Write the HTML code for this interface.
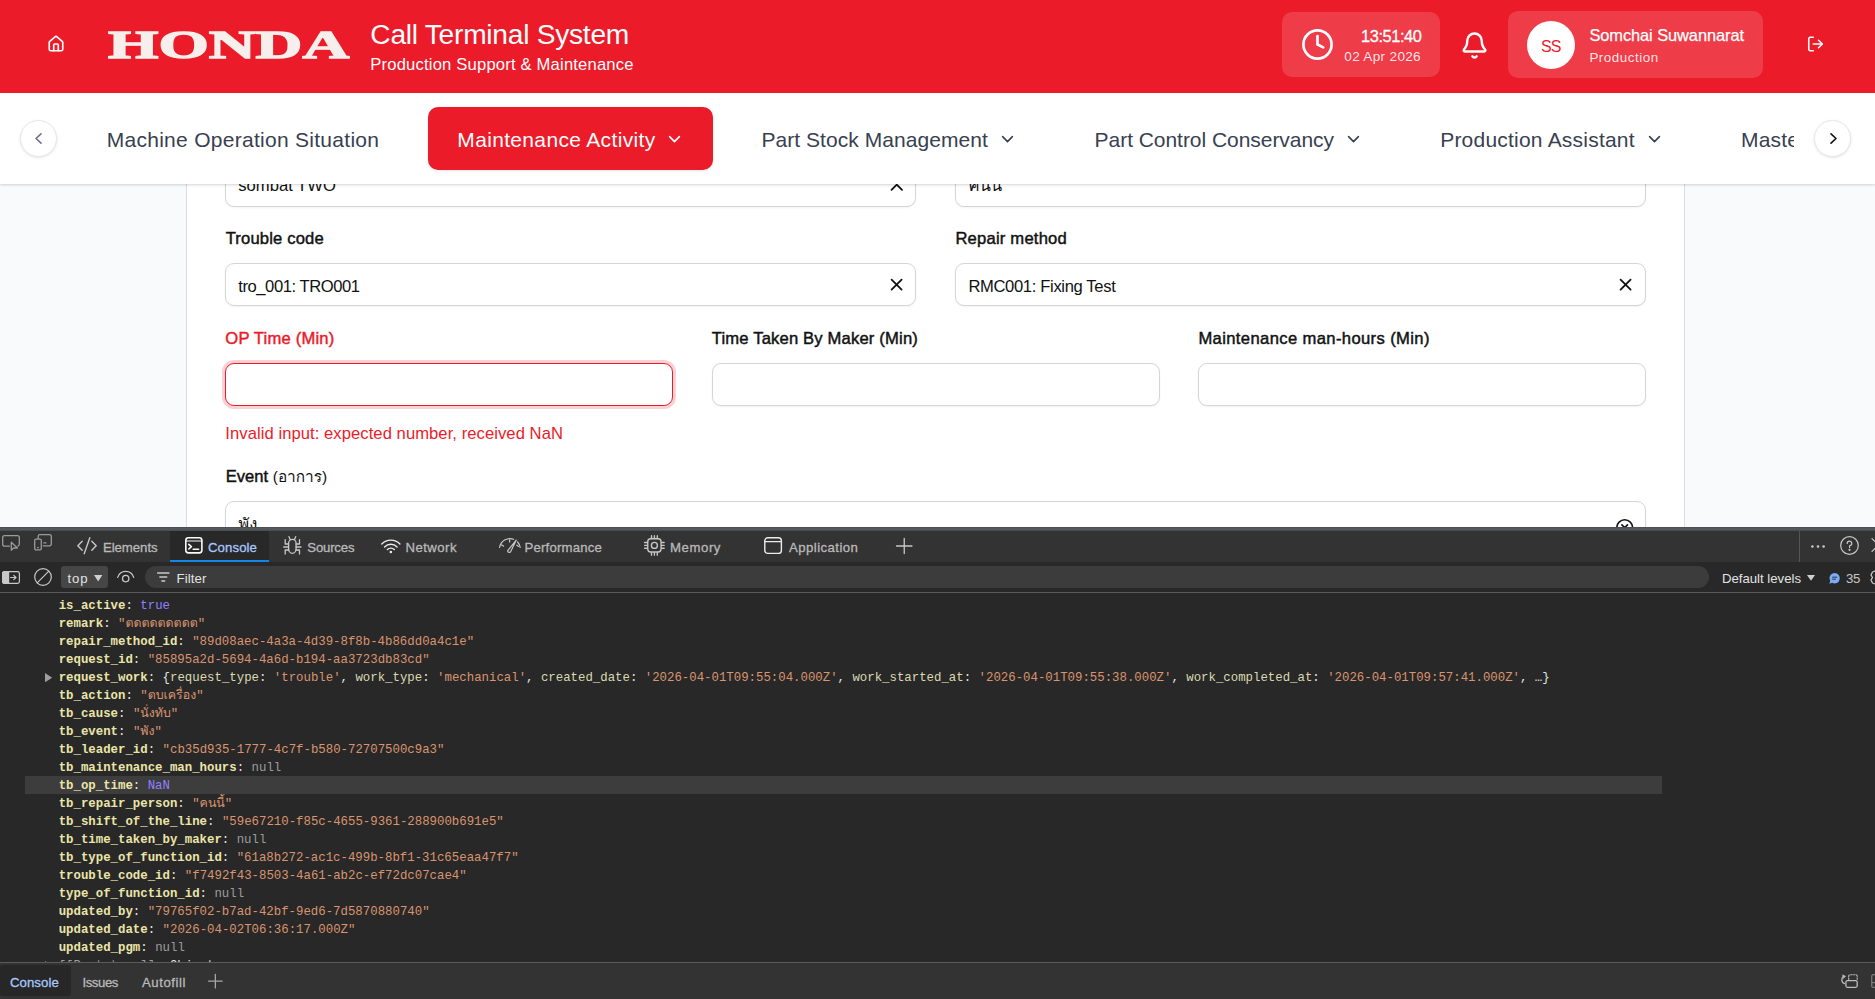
<!DOCTYPE html>
<html lang="en">
<head>
<meta charset="utf-8">
<title>Call Terminal System</title>
<style>
*{box-sizing:border-box;margin:0;padding:0}
html,body{width:1875px;height:999px;overflow:hidden;background:#f9fafb;font-family:"Liberation Sans","Loma","Noto Sans Thai",sans-serif}
.abs,.t,svg.i{position:absolute}
.t{white-space:nowrap;line-height:normal;z-index:4}
#nav,#hdr{z-index:2}
#hdr ~ *{z-index:3}
.t b{font-weight:400;-webkit-text-stroke:0.45px currentColor}
#page{position:absolute;left:0;top:0;width:1875px;height:527px;overflow:hidden;background:#f9fafb}
#hdr{left:0;top:0;width:1875px;height:93px;background:#eb1b29}
#nav{left:0;top:93px;width:1875px;height:91px;background:#fff;box-shadow:0 1px 3px rgba(0,0,0,.12),0 1px 2px rgba(0,0,0,.06)}
#card{left:186px;top:150px;width:1499px;height:400px;background:#fff;border:1px solid #dcdde1}
.pill{background:rgba(255,255,255,.15);border-radius:10px}
.inp{background:#fff;border:1px solid #d3d5d9;border-radius:9px;box-shadow:0 1px 2px rgba(0,0,0,.05)}
.cbtn{width:37px;height:37px;border-radius:50%;background:#fff;border:1px solid #e5e7eb;box-shadow:0 1px 3px rgba(0,0,0,.1)}
svg.i{fill:none;stroke-linecap:round;stroke-linejoin:round;overflow:visible}
#dt{position:absolute;left:0;top:527px;width:1875px;height:472px;background:#282828;overflow:hidden}
.k{color:#ebe5a8;font-weight:700}.k2{color:#dcd8b0}.s{color:#d9946f}.p{color:#9080ff}.n{color:#9c9c9c}.w{color:#e4e4e4}
</style>
</head>
<body>
<div id="page">
  <div class="abs" id="card"></div>
  <!-- form fields -->
  <div class="abs inp" style="left:225px;top:164px;width:691px;height:43px"></div>
  <div class="abs inp" style="left:955px;top:164px;width:691px;height:43px"></div>
  <div class="abs inp" style="left:225px;top:263px;width:691px;height:43px"></div>
  <div class="abs inp" style="left:955px;top:263px;width:691px;height:43px"></div>
  <div class="abs inp" style="left:225px;top:363px;width:448px;height:43px;border:1.5px solid #eb1b29;box-shadow:0 0 0 3px rgba(235,27,41,.2)"></div>
  <div class="abs inp" style="left:711.5px;top:363px;width:448px;height:43px"></div>
  <div class="abs inp" style="left:1198px;top:363px;width:448px;height:43px"></div>
  <div class="abs inp" style="left:225px;top:501px;width:1421px;height:90px"></div>
  <!-- field icons -->
  <svg class="i" style="left:891px;top:184px" width="11.5" height="6" viewBox="0 0 11.5 6" stroke="#111" stroke-width="1.8"><path d="M0.5 5.8 L5.75 0.6 L11 5.8"/></svg>
  <svg class="i" style="left:891px;top:279.4px" width="11.2" height="11.2" viewBox="0 0 11.2 11.2" stroke="#111" stroke-width="1.8"><path d="M0.6 0.6 L10.6 10.6 M10.6 0.6 L0.6 10.6"/></svg>
  <svg class="i" style="left:1620px;top:279.4px" width="11.2" height="11.2" viewBox="0 0 11.2 11.2" stroke="#111" stroke-width="1.8"><path d="M0.6 0.6 L10.6 10.6 M10.6 0.6 L0.6 10.6"/></svg>
  <svg class="i" style="left:1616px;top:518.6px" width="17.4" height="17.4" viewBox="0 0 17.4 17.4" stroke="#111" stroke-width="1.6"><circle cx="8.7" cy="8.7" r="7.9"/><path d="M5.9 5.9 L11.5 11.5 M11.5 5.9 L5.9 11.5"/></svg>

  <div class="abs" id="nav"></div>
  <div class="abs" id="hdr"></div>

  <!-- header icons -->
  <svg class="i" style="left:46.5px;top:35px" width="18" height="18" viewBox="0 0 24 24" stroke="#fff" stroke-width="2.2"><path d="M15 21v-8a1 1 0 0 0-1-1h-4a1 1 0 0 0-1 1v8"/><path d="M3 10a2 2 0 0 1 .709-1.528l7-5.999a2 2 0 0 1 2.582 0l7 5.999A2 2 0 0 1 21 10v9a2 2 0 0 1-2 2H5a2 2 0 0 1-2-2z"/></svg>
  <div class="abs pill" style="left:1282px;top:12px;width:158px;height:65px"></div>
  <svg class="i" style="left:1302.2px;top:29.2px" width="31" height="31" viewBox="0 0 31 31" stroke="#fff" stroke-width="2.7"><circle cx="15.5" cy="15.5" r="14.1"/><path d="M15.5 7 V15.5 L21.2 18.4"/></svg>
  <svg class="i" style="left:1459.9px;top:30.5px" width="29" height="29" viewBox="0 0 24 24" stroke="#fff" stroke-width="2"><path d="M10.268 21a2 2 0 0 0 3.464 0"/><path d="M3.262 15.326A1 1 0 0 0 4 17h16a1 1 0 0 0 .74-1.673C19.41 13.956 18 12.499 18 8A6 6 0 0 0 6 8c0 4.499-1.411 5.956-2.738 7.326"/></svg>
  <div class="abs pill" style="left:1508px;top:11px;width:255px;height:67px"></div>
  <div class="abs" style="left:1527px;top:21px;width:48px;height:48px;border-radius:50%;background:#fff"></div>
  <svg class="i" style="left:1806px;top:35px" width="19" height="18" viewBox="0 0 24 24" stroke="#fff" stroke-width="2.1"><path d="M9 21H5a2 2 0 0 1-2-2V5a2 2 0 0 1 2-2h4"/><path d="M16 17l5-5-5-5"/><path d="M21 12H9"/></svg>

  <!-- nav -->
  <div class="abs cbtn" style="left:20px;top:120px"></div>
  <svg class="i" style="left:34.8px;top:133.3px" width="7" height="11" viewBox="0 0 7 11" stroke="#6b7280" stroke-width="1.6"><path d="M6 0.8 L1 5.5 L6 10.2"/></svg>
  <div class="abs" style="left:428px;top:107px;width:285px;height:63px;border-radius:10px;background:#eb1b29;box-shadow:0 1px 3px rgba(0,0,0,.1)"></div>
  <svg class="i ch" style="left:669.4px;top:136px" width="11" height="6.4" viewBox="0 0 11 6.4" stroke="#fff" stroke-width="1.6"><path d="M0.6 0.6 L5.5 5.6 L10.4 0.6"/></svg>
  <svg class="i ch" style="left:1001.5px;top:136px" width="11" height="6.4" viewBox="0 0 11 6.4" stroke="#374151" stroke-width="1.6"><path d="M0.6 0.6 L5.5 5.6 L10.4 0.6"/></svg>
  <svg class="i ch" style="left:1348px;top:136px" width="11" height="6.4" viewBox="0 0 11 6.4" stroke="#374151" stroke-width="1.6"><path d="M0.6 0.6 L5.5 5.6 L10.4 0.6"/></svg>
  <svg class="i ch" style="left:1649px;top:136px" width="11" height="6.4" viewBox="0 0 11 6.4" stroke="#374151" stroke-width="1.6"><path d="M0.6 0.6 L5.5 5.6 L10.4 0.6"/></svg>
  <div class="abs" id="mclip" style="left:1741px;top:110px;width:53px;height:60px;overflow:hidden;z-index:3"></div>
  <div class="abs cbtn" style="left:1814px;top:120px"></div>
  <svg class="i" style="left:1829.5px;top:133.3px" width="7" height="11" viewBox="0 0 7 11" stroke="#111" stroke-width="1.6"><path d="M1 0.8 L6 5.5 L1 10.2"/></svg>
</div>

<div id="dt">
  <div class="abs" style="left:0;top:0;width:1875px;height:4px;z-index:2;background:linear-gradient(#48494d 0,#56585d 30%,#54565b 80%,#3c3d40 100%)"></div>
  <div class="abs" style="left:0;top:4px;width:1875px;height:31px;background:#333"></div>
  <div class="abs" style="left:170px;top:4px;width:99px;height:31px;background:#282828;border-bottom:2px solid #1386ea"></div>
  <div class="abs" style="left:1799px;top:4px;width:1px;height:31px;background:#555"></div>
  <div class="abs" style="left:61px;top:39px;width:47px;height:22px;background:#464646;border-radius:3px"></div>
  <div class="abs" style="left:145px;top:39px;width:1564px;height:22px;background:#3c3c3c;border-radius:11px"></div>
  <div class="abs" style="left:0;top:65px;width:1875px;height:1px;background:#5a5a5a"></div>
  <div class="abs" style="left:25px;top:249px;width:1637px;height:18px;background:#3d3d3d"></div>
  <div class="abs" style="left:0;top:435px;width:1875px;height:37px;background:#333;border-top:1px solid #5a5a5a;z-index:5"></div>
  <div class="abs" style="left:0;top:438px;width:71px;height:31px;background:#272727;border-radius:3px;z-index:5"></div>
</div>
<!-- devtools icons -->
<svg class="i" style="left:2px;top:535px" width="18" height="16" viewBox="0 0 18 16" stroke="#9a9a9a" stroke-width="1.3"><path d="M7.5 11.2 H2.6 A1.9 1.9 0 0 1 0.7 9.3 V2.6 A1.9 1.9 0 0 1 2.6 0.7 H15.4 A1.9 1.9 0 0 1 17.3 2.6 V9.3 A1.9 1.9 0 0 1 15.9 11.1"/><path d="M9.3 7.2 V15.2 L11.6 13 L15.4 13 Z"/></svg>
<svg class="i" style="left:34px;top:534.3px" width="18" height="16.5" viewBox="0 0 18 16.5" stroke="#9a9a9a" stroke-width="1.3"><path d="M4.2 4.4 V2.3 A1.6 1.6 0 0 1 5.8 0.7 H15.7 A1.6 1.6 0 0 1 17.3 2.3 V10.2 A1.6 1.6 0 0 1 15.7 11.8 H9.3"/><rect x="0.7" y="5.1" width="6.6" height="10.7" rx="1.3"/><path d="M3.6 13.6 H4.4 M9.8 8.8 H12"/></svg>
<svg class="i" style="left:77.3px;top:536.8px" width="20" height="17.4" viewBox="0 0 20 17.4" stroke="#c8c8c8" stroke-width="1.4"><path d="M5.2 4.2 L0.8 8.7 L5.2 13.2 M14.8 4.2 L19.2 8.7 L14.8 13.2 M12.8 0.7 L7.2 16.7"/></svg>
<svg class="i" style="left:184.7px;top:537px" width="17.7" height="16.7" viewBox="0 0 17.7 16.7" stroke="#fafafa" stroke-width="1.6"><rect x="0.8" y="0.8" width="16.1" height="15.1" rx="2.6"/><path d="M0.8 4 H16.9" stroke-width="1.1"/><path d="M3.8 7.4 L6.4 9.7 L3.8 12 M8.2 12.2 H13.6"/></svg>
<svg class="i" style="left:283.3px;top:535.7px" width="18.7" height="18.6" viewBox="0 0 18.7 18.6" stroke="#c8c8c8" stroke-width="1.3"><path d="M5.6 7.2 A3.75 3.75 0 0 1 13.1 7.2 V12.4 A3.75 5 0 0 1 5.6 12.4 Z"/><path d="M7.2 3.6 L6 0.7 M11.5 3.6 L12.7 0.7 M5.6 8 H2.2 V3.6 M13.1 8 H16.5 V3.6 M5.6 11 H0.7 M13.1 11 H18 M5.8 14 H2.2 V18 M12.9 14 H16.5 V18"/></svg>
<svg class="i" style="left:380.7px;top:539px" width="19.7" height="14.5" viewBox="0 0 19.7 14.5" stroke="#ececec" stroke-width="1.4"><path d="M0.8 5 A12.5 12.5 0 0 1 18.9 5"/><path d="M3.6 7.9 A8.6 8.6 0 0 1 16.1 7.9"/><path d="M6.4 10.6 A4.8 4.8 0 0 1 13.3 10.6"/><circle cx="9.85" cy="13" r="1.3" fill="#ececec" stroke="none"/></svg>
<svg class="i" style="left:498.7px;top:537.5px" width="22" height="15" viewBox="0 0 22 15" stroke="#c8c8c8" stroke-width="1.2"><path d="M0.62 9.4 A10.4 10.4 0 0 1 14.6 1.3 M18.6 4 A10.4 10.4 0 0 1 21.18 9.4"/><path d="M17.3 2.1 L11.7 13.5 A1.5 1.5 0 0 1 8.9 12.3 Z"/><path d="M10.6 1.9 V4 M2.6 6.9 L4.5 8.1 M17.9 7.2 L19.4 8.4"/></svg>
<svg class="i" style="left:644.1px;top:534.8px" width="20.8" height="20.8" viewBox="0 0 19.4 19.4" stroke="#c8c8c8" stroke-width="1.25"><rect x="3.5" y="3.5" width="12.4" height="12.4" rx="2.8"/><circle cx="9.7" cy="9.7" r="2.8"/><path d="M7 0.6 V3 M9.7 0.6 V3 M12.4 0.6 V3 M7 16.4 V18.8 M9.7 16.4 V18.8 M12.4 16.4 V18.8 M0.6 7 H3 M0.6 9.7 H3 M0.6 12.4 H3 M16.4 7 H18.8 M16.4 9.7 H18.8 M16.4 12.4 H18.8"/></svg>
<svg class="i" style="left:764.4px;top:536.7px" width="18.2" height="17.2" viewBox="0 0 18.2 17.2" stroke="#ececec" stroke-width="1.4"><rect x="0.8" y="0.8" width="16.6" height="15.6" rx="3"/><path d="M0.8 4.6 H17.4"/></svg>
<svg class="i" style="left:896.2px;top:537.8px" width="16.5" height="16" viewBox="0 0 16.5 16" stroke="#c8c8c8" stroke-width="1.3"><path d="M8.25 0.5 V15.5 M0.5 8 H16"/></svg>
<svg class="i" style="left:1811px;top:544.5px" width="14" height="3" viewBox="0 0 14 3" fill="#c8c8c8" stroke="none"><circle cx="1.4" cy="1.5" r="1.3" fill="#c8c8c8"/><circle cx="7" cy="1.5" r="1.3" fill="#c8c8c8"/><circle cx="12.6" cy="1.5" r="1.3" fill="#c8c8c8"/></svg>
<svg class="i" style="left:1840px;top:536px" width="19" height="19" viewBox="0 0 19 19" stroke="#c8c8c8" stroke-width="1.2"><circle cx="9.5" cy="9.5" r="8.8"/><path d="M7.2 7.4 A2.3 2.3 0 1 1 9.9 9.7 Q9.5 10.2 9.5 11.4"/><circle cx="9.5" cy="13.8" r="0.5" fill="#c8c8c8"/></svg>
<svg class="i" style="left:1867px;top:538px" width="14" height="14" viewBox="0 0 14 14" stroke="#c8c8c8" stroke-width="1.3"><path d="M5 0.6 L18 13.4 M5 13.4 L18 0.6"/></svg>
<!-- filter bar icons -->
<svg class="i" style="left:2px;top:570.5px" width="18" height="13" viewBox="0 0 18 13" stroke="#c8c8c8" stroke-width="1.2"><rect x="0.6" y="0.6" width="16.8" height="11.8" rx="1.8"/><path d="M0.6 2.4 A1.8 1.8 0 0 1 2.4 0.6 H6.6 V12.4 H2.4 A1.8 1.8 0 0 1 0.6 10.6 Z" fill="#c8c8c8"/><path d="M8.6 6.5 H13.8 M11.8 4.3 L14 6.5 L11.8 8.7"/></svg>
<svg class="i" style="left:34px;top:568px" width="18" height="18" viewBox="0 0 18 18" stroke="#c8c8c8" stroke-width="1.2"><circle cx="9" cy="9" r="8.3"/><path d="M3.2 14.8 L14.8 3.2"/></svg>
<svg class="i" style="left:93.9px;top:575px" width="8.4" height="6.4" viewBox="0 0 8.4 6.4" stroke="none"><path d="M0 0 H8.4 L4.2 6.4 Z" fill="#d0d0d0"/></svg>
<svg class="i" style="left:117.3px;top:571.3px" width="17.4" height="11.5" viewBox="0 0 17.4 11.5" stroke="#c8c8c8" stroke-width="1.3"><path d="M0.7 6.4 A8.3 8.3 0 0 1 16.7 6.4"/><circle cx="8.7" cy="7.6" r="3.2"/></svg>
<svg class="i" style="left:156.8px;top:572.3px" width="12.6" height="10" viewBox="0 0 12.6 10" stroke="#c8c8c8" stroke-width="1.3"><path d="M0.6 1 H12 M2.8 5 H9.8 M4.8 9 H7.8"/></svg>
<svg class="i" style="left:1807px;top:575.4px" width="8" height="5.8" viewBox="0 0 8 5.8" stroke="none"><path d="M0 0 H8 L4 5.8 Z" fill="#d0d0d0"/></svg>
<svg class="i" style="left:1829px;top:572.5px" width="11" height="11" viewBox="0 0 11 11" stroke="none"><path d="M5.6 0 A5.2 5.2 0 1 1 3.2 9.8 L0.3 10.8 L1.2 8 A5.2 5.2 0 0 1 5.6 0 Z" fill="#7cacf8"/><path d="M3.6 4.2 H7.8 M3.6 6.2 H6.4" stroke="#282828" stroke-width="0.9"/></svg>
<svg class="i" style="left:1870px;top:570px" width="14" height="15" viewBox="0 0 14 15" stroke="#c8c8c8" stroke-width="1.3"><path d="M5 1 L2.5 2 L1 5 L2.5 7.5 L1 10 L2.5 13 L5 14"/></svg>
<!-- console expand arrows -->
<svg class="i" style="left:44.8px;top:672.7px" width="7.2" height="9.3" viewBox="0 0 7.2 9.3" stroke="none"><path d="M0 0 L7.2 4.65 L0 9.3 Z" fill="#9e9e9e"/></svg>
<svg class="i" style="left:44.8px;top:960.7px" width="7.2" height="9.3" viewBox="0 0 7.2 9.3" stroke="none"><path d="M0 0 L7.2 4.65 L0 9.3 Z" fill="#9e9e9e"/></svg>

<!-- bottom bar icons -->
<svg class="i" style="left:207.7px;top:973.8px;z-index:7" width="14.7" height="14.4" viewBox="0 0 14.7 14.4" stroke="#a6a6a6" stroke-width="1.3"><path d="M7.35 0.5 V13.9 M0.5 7.2 H14.2"/></svg>
<svg class="i" style="left:1838.8px;top:974px;z-index:7" width="19" height="14" viewBox="0 0 19 14" stroke="#bdbdbd" stroke-width="1.3"><rect x="6.9" y="6.7" width="11.3" height="6.6" rx="1.5"/><path d="M9.7 5.4 V2.2 A1.5 1.5 0 0 1 11.2 0.7 H16.7 A1.5 1.5 0 0 1 18.2 2.2 V5.4" stroke-dasharray="1.5 1.4" stroke-width="1.1"/><path d="M5.4 9.6 A4.2 4.2 0 0 1 4.4 2.4"/><path d="M3.8 1.0 L6.6 2.2 L4.6 4.2 Z" fill="#bdbdbd" stroke-width="0.6"/></svg>
<svg class="i" style="left:1871px;top:974.3px;z-index:7" width="10" height="14" viewBox="0 0 10 14" stroke="#7a7a7a" stroke-width="1.3"><path d="M8 0.7 H2.3 A1.6 1.6 0 0 0 0.7 2.3 V11.7 A1.6 1.6 0 0 0 2.3 13.3 H8 M0.7 8.6 H8"/></svg>

<span class="t" id="logo" style='left:108.4px;top:20.60px;font:700 40px "Liberation Serif","DejaVu Serif",serif;color:#f6efec;transform-origin:0 50%;transform:scaleX(1.62);-webkit-text-stroke:1.3px #f6efec;'>HONDA</span>
<span class="t" id="title" style='left:370.3px;top:18.20px;font:400 28.2px "Liberation Sans","Loma","Noto Sans Thai","FreeSerif",sans-serif;color:#fff;letter-spacing:-0.275px;'>Call Terminal System</span>
<span class="t" id="subtitle" style='left:370.3px;top:55.00px;font:400 16.6px "Liberation Sans","Loma","Noto Sans Thai","FreeSerif",sans-serif;color:#fff;letter-spacing:0.188px;'>Production Support &amp; Maintenance</span>
<span class="t" id="time" style='left:1361px;top:27.00px;font:400 16.4px "Liberation Sans","Loma","Noto Sans Thai","FreeSerif",sans-serif;color:#fff;letter-spacing:-0.414px;-webkit-text-stroke:0.3px #fff;'>13:51:40</span>
<span class="t" id="date" style='left:1344.3px;top:49.20px;font:400 13.6px "Liberation Sans","Loma","Noto Sans Thai","FreeSerif",sans-serif;color:rgba(255,255,255,.88);letter-spacing:0.307px;'>02 Apr 2026</span>
<span class="t" id="ss" style='left:1541px;top:37.80px;font:400 16px "Liberation Sans","Loma","Noto Sans Thai","FreeSerif",sans-serif;color:#eb1b29;letter-spacing:-0.972px;'>SS</span>
<span class="t" id="uname" style='left:1589.4px;top:26.00px;font:400 16.4px "Liberation Sans","Loma","Noto Sans Thai","FreeSerif",sans-serif;color:#fff;letter-spacing:-0.067px;-webkit-text-stroke:0.25px #fff;'>Somchai Suwannarat</span>
<span class="t" id="urole" style='left:1589.4px;top:49.90px;font:400 13.4px "Liberation Sans","Loma","Noto Sans Thai","FreeSerif",sans-serif;color:rgba(255,255,255,.88);letter-spacing:0.527px;'>Production</span>
<span class="t" id="n1" style='left:106.7px;top:127.80px;font:400 21px "Liberation Sans","Loma","Noto Sans Thai","FreeSerif",sans-serif;color:#374151;letter-spacing:0.281px;'>Machine Operation Situation</span>
<span class="t" id="n2" style='left:457.3px;top:127.80px;font:400 21px "Liberation Sans","Loma","Noto Sans Thai","FreeSerif",sans-serif;color:#fff;letter-spacing:0.338px;'>Maintenance Activity</span>
<span class="t" id="n3" style='left:761.4px;top:127.80px;font:400 21px "Liberation Sans","Loma","Noto Sans Thai","FreeSerif",sans-serif;color:#374151;letter-spacing:0.063px;'>Part Stock Management</span>
<span class="t" id="n4" style='left:1094.6px;top:127.80px;font:400 21px "Liberation Sans","Loma","Noto Sans Thai","FreeSerif",sans-serif;color:#374151;letter-spacing:-0.043px;'>Part Control Conservancy</span>
<span class="t" id="n5" style='left:1440.2px;top:127.80px;font:400 21px "Liberation Sans","Loma","Noto Sans Thai","FreeSerif",sans-serif;color:#374151;letter-spacing:0.216px;'>Production Assistant</span>
<span class="t" id="n6" style='left:1741px;top:127.80px;font:400 21px "Liberation Sans","Loma","Noto Sans Thai","FreeSerif",sans-serif;color:#374151;width:53px;overflow:hidden;letter-spacing:0.2px;'>Master Data</span>
<span class="t" id="v0a" style='left:238.3px;top:176.30px;font:400 16.6px "Liberation Sans","Loma","Noto Sans Thai","FreeSerif",sans-serif;color:#111;letter-spacing:0.006px;z-index:1;'>sombat TWO</span>
<span class="t" id="v0b" style='left:968.4px;top:172.30px;font:400 16.6px "Liberation Sans","Loma","Noto Sans Thai","FreeSerif",sans-serif;color:#111;z-index:1;'>คนนี้</span>
<span class="t" id="l1" style='left:225.7px;top:229.00px;font:400 16.6px "Liberation Sans","Loma","Noto Sans Thai","FreeSerif",sans-serif;color:#111;letter-spacing:0.154px;-webkit-text-stroke:0.45px currentColor;'>Trouble code</span>
<span class="t" id="l2" style='left:955.4px;top:229.00px;font:400 16.6px "Liberation Sans","Loma","Noto Sans Thai","FreeSerif",sans-serif;color:#111;letter-spacing:0.212px;-webkit-text-stroke:0.45px currentColor;'>Repair method</span>
<span class="t" id="v1" style='left:238.3px;top:277.00px;font:400 16.6px "Liberation Sans","Loma","Noto Sans Thai","FreeSerif",sans-serif;color:#111;letter-spacing:-0.448px;'>tro_001: TRO001</span>
<span class="t" id="v2" style='left:968.4px;top:277.00px;font:400 16.6px "Liberation Sans","Loma","Noto Sans Thai","FreeSerif",sans-serif;color:#111;letter-spacing:-0.353px;'>RMC001: Fixing Test</span>
<span class="t" id="l3" style='left:225.3px;top:329.30px;font:400 16.6px "Liberation Sans","Loma","Noto Sans Thai","FreeSerif",sans-serif;color:#eb1b29;letter-spacing:0.196px;-webkit-text-stroke:0.45px currentColor;'>OP Time (Min)</span>
<span class="t" id="l4" style='left:711.8px;top:329.30px;font:400 16.6px "Liberation Sans","Loma","Noto Sans Thai","FreeSerif",sans-serif;color:#111;letter-spacing:0.170px;-webkit-text-stroke:0.45px currentColor;'>Time Taken By Maker (Min)</span>
<span class="t" id="l5" style='left:1198.4px;top:329.30px;font:400 16.6px "Liberation Sans","Loma","Noto Sans Thai","FreeSerif",sans-serif;color:#111;letter-spacing:0.372px;-webkit-text-stroke:0.45px currentColor;'>Maintenance man-hours (Min)</span>
<span class="t" id="err" style='left:225.3px;top:424.20px;font:400 16.6px "Liberation Sans","Loma","Noto Sans Thai","FreeSerif",sans-serif;color:#eb1b29;letter-spacing:0.065px;'>Invalid input: expected number, received NaN</span>
<span class="t" id="l6" style='left:225.7px;top:464.30px;font:400 16.6px "Liberation Sans","Loma","Noto Sans Thai","FreeSerif",sans-serif;color:#111;'><b>Event</b> <span style="font-size:15.4px">(อาการ)</span></span>
<span class="t" id="v6" style='left:238.3px;top:511.00px;font:400 16.6px "Liberation Sans","Loma","Noto Sans Thai","FreeSerif",sans-serif;color:#111;z-index:1;'>พัง</span>
<span class="t" id="d_el" style='left:102.9px;top:540.00px;font:400 13.2px "Liberation Sans","Loma","Noto Sans Thai","FreeSerif",sans-serif;color:#b9b9b9;letter-spacing:-0.036px;-webkit-text-stroke:0.3px currentColor;'>Elements</span>
<span class="t" id="d_co" style='left:208px;top:540.00px;font:400 13.2px "Liberation Sans","Loma","Noto Sans Thai","FreeSerif",sans-serif;color:#a8c7fa;letter-spacing:0.087px;-webkit-text-stroke:0.3px currentColor;'>Console</span>
<span class="t" id="d_so" style='left:307.3px;top:540.00px;font:400 13.2px "Liberation Sans","Loma","Noto Sans Thai","FreeSerif",sans-serif;color:#b9b9b9;letter-spacing:-0.199px;-webkit-text-stroke:0.3px currentColor;'>Sources</span>
<span class="t" id="d_ne" style='left:405.5px;top:540.00px;font:400 13.2px "Liberation Sans","Loma","Noto Sans Thai","FreeSerif",sans-serif;color:#b9b9b9;letter-spacing:0.446px;-webkit-text-stroke:0.3px currentColor;'>Network</span>
<span class="t" id="d_pe" style='left:524.5px;top:540.00px;font:400 13.2px "Liberation Sans","Loma","Noto Sans Thai","FreeSerif",sans-serif;color:#b9b9b9;letter-spacing:0.182px;-webkit-text-stroke:0.3px currentColor;'>Performance</span>
<span class="t" id="d_me" style='left:670px;top:540.00px;font:400 13.2px "Liberation Sans","Loma","Noto Sans Thai","FreeSerif",sans-serif;color:#b9b9b9;letter-spacing:0.562px;-webkit-text-stroke:0.3px currentColor;'>Memory</span>
<span class="t" id="d_ap" style='left:789px;top:540.00px;font:400 13.2px "Liberation Sans","Loma","Noto Sans Thai","FreeSerif",sans-serif;color:#b9b9b9;letter-spacing:0.435px;-webkit-text-stroke:0.3px currentColor;'>Application</span>
<span class="t" id="d_top" style='left:67.5px;top:570.60px;font:400 13.2px "Liberation Sans","Loma","Noto Sans Thai","FreeSerif",sans-serif;color:#e3e3e3;letter-spacing:0.885px;'>top</span>
<span class="t" id="d_fil" style='left:176.5px;top:570.60px;font:400 13.2px "Liberation Sans","Loma","Noto Sans Thai","FreeSerif",sans-serif;color:#e3e3e3;letter-spacing:0.115px;'>Filter</span>
<span class="t" id="d_def" style='left:1721.9px;top:570.60px;font:400 13.2px "Liberation Sans","Loma","Noto Sans Thai","FreeSerif",sans-serif;color:#e3e3e3;letter-spacing:-0.005px;'>Default levels</span>
<span class="t" id="d_35" style='left:1846px;top:570.60px;font:400 13.2px "Liberation Sans","Loma","Noto Sans Thai","FreeSerif",sans-serif;color:#c7c7c7;letter-spacing:-0.336px;'>35</span>
<span class="t" id="b_co" style='left:9.9px;top:974.60px;font:400 13.2px "Liberation Sans","Loma","Noto Sans Thai","FreeSerif",sans-serif;color:#a8c7fa;letter-spacing:0.087px;-webkit-text-stroke:0.3px currentColor;z-index:6;'>Console</span>
<span class="t" id="b_is" style='left:82.4px;top:974.60px;font:400 13.2px "Liberation Sans","Loma","Noto Sans Thai","FreeSerif",sans-serif;color:#b9b9b9;letter-spacing:-0.421px;-webkit-text-stroke:0.3px currentColor;z-index:6;'>Issues</span>
<span class="t" id="b_au" style='left:142px;top:974.60px;font:400 13.2px "Liberation Sans","Loma","Noto Sans Thai","FreeSerif",sans-serif;color:#b9b9b9;letter-spacing:0.551px;-webkit-text-stroke:0.3px currentColor;z-index:6;'>Autofill</span>
<span class="t" id="c0" style='left:58.7px;top:598.90px;font:400 12.36px "Liberation Mono","Loma","Noto Sans Thai","DejaVu Sans Mono",monospace;color:#e4e4e4;z-index:1;'><span class="k">is_active</span><span class="w">: </span><span class="p">true</span></span>
<span class="t" id="c1" style='left:58.7px;top:612.90px;font:400 12.36px "Liberation Mono","Loma","Noto Sans Thai","DejaVu Sans Mono",monospace;color:#e4e4e4;z-index:1;'><span class="k">remark</span><span class="w">: </span><span class="s">&quot;ตดตดตดตดต&quot;</span></span>
<span class="t" id="c2" style='left:58.7px;top:634.90px;font:400 12.36px "Liberation Mono","Loma","Noto Sans Thai","DejaVu Sans Mono",monospace;color:#e4e4e4;z-index:1;'><span class="k">repair_method_id</span><span class="w">: </span><span class="s">&quot;89d08aec-4a3a-4d39-8f8b-4b86dd0a4c1e&quot;</span></span>
<span class="t" id="c3" style='left:58.7px;top:652.90px;font:400 12.36px "Liberation Mono","Loma","Noto Sans Thai","DejaVu Sans Mono",monospace;color:#e4e4e4;z-index:1;'><span class="k">request_id</span><span class="w">: </span><span class="s">&quot;85895a2d-5694-4a6d-b194-aa3723db83cd&quot;</span></span>
<span class="t" id="c4" style='left:58.7px;top:670.90px;font:400 12.36px "Liberation Mono","Loma","Noto Sans Thai","DejaVu Sans Mono",monospace;color:#e4e4e4;z-index:1;'><span class="k">request_work</span><span class="w">: {</span><span class="k2">request_type</span><span class="w">: </span><span class="s">&#x27;trouble&#x27;</span><span class="w">, </span><span class="k2">work_type</span><span class="w">: </span><span class="s">&#x27;mechanical&#x27;</span><span class="w">, </span><span class="k2">created_date</span><span class="w">: </span><span class="s">&#x27;2026-04-01T09:55:04.000Z&#x27;</span><span class="w">, </span><span class="k2">work_started_at</span><span class="w">: </span><span class="s">&#x27;2026-04-01T09:55:38.000Z&#x27;</span><span class="w">, </span><span class="k2">work_completed_at</span><span class="w">: </span><span class="s">&#x27;2026-04-01T09:57:41.000Z&#x27;</span><span class="w">, …}</span></span>
<span class="t" id="c5" style='left:58.7px;top:684.90px;font:400 12.36px "Liberation Mono","Loma","Noto Sans Thai","DejaVu Sans Mono",monospace;color:#e4e4e4;z-index:1;'><span class="k">tb_action</span><span class="w">: </span><span class="s">&quot;ตบเครื่อง&quot;</span></span>
<span class="t" id="c6" style='left:58.7px;top:702.90px;font:400 12.36px "Liberation Mono","Loma","Noto Sans Thai","DejaVu Sans Mono",monospace;color:#e4e4e4;z-index:1;'><span class="k">tb_cause</span><span class="w">: </span><span class="s">&quot;นั่งทับ&quot;</span></span>
<span class="t" id="c7" style='left:58.7px;top:720.90px;font:400 12.36px "Liberation Mono","Loma","Noto Sans Thai","DejaVu Sans Mono",monospace;color:#e4e4e4;z-index:1;'><span class="k">tb_event</span><span class="w">: </span><span class="s">&quot;พัง&quot;</span></span>
<span class="t" id="c8" style='left:58.7px;top:742.90px;font:400 12.36px "Liberation Mono","Loma","Noto Sans Thai","DejaVu Sans Mono",monospace;color:#e4e4e4;z-index:1;'><span class="k">tb_leader_id</span><span class="w">: </span><span class="s">&quot;cb35d935-1777-4c7f-b580-72707500c9a3&quot;</span></span>
<span class="t" id="c9" style='left:58.7px;top:760.90px;font:400 12.36px "Liberation Mono","Loma","Noto Sans Thai","DejaVu Sans Mono",monospace;color:#e4e4e4;z-index:1;'><span class="k">tb_maintenance_man_hours</span><span class="w">: </span><span class="n">null</span></span>
<span class="t" id="c10" style='left:58.7px;top:778.90px;font:400 12.36px "Liberation Mono","Loma","Noto Sans Thai","DejaVu Sans Mono",monospace;color:#e4e4e4;z-index:1;'><span class="k">tb_op_time</span><span class="w">: </span><span class="p">NaN</span></span>
<span class="t" id="c11" style='left:58.7px;top:792.90px;font:400 12.36px "Liberation Mono","Loma","Noto Sans Thai","DejaVu Sans Mono",monospace;color:#e4e4e4;z-index:1;'><span class="k">tb_repair_person</span><span class="w">: </span><span class="s">&quot;คนนี้&quot;</span></span>
<span class="t" id="c12" style='left:58.7px;top:814.90px;font:400 12.36px "Liberation Mono","Loma","Noto Sans Thai","DejaVu Sans Mono",monospace;color:#e4e4e4;z-index:1;'><span class="k">tb_shift_of_the_line</span><span class="w">: </span><span class="s">&quot;59e67210-f85c-4655-9361-288900b691e5&quot;</span></span>
<span class="t" id="c13" style='left:58.7px;top:832.90px;font:400 12.36px "Liberation Mono","Loma","Noto Sans Thai","DejaVu Sans Mono",monospace;color:#e4e4e4;z-index:1;'><span class="k">tb_time_taken_by_maker</span><span class="w">: </span><span class="n">null</span></span>
<span class="t" id="c14" style='left:58.7px;top:850.90px;font:400 12.36px "Liberation Mono","Loma","Noto Sans Thai","DejaVu Sans Mono",monospace;color:#e4e4e4;z-index:1;'><span class="k">tb_type_of_function_id</span><span class="w">: </span><span class="s">&quot;61a8b272-ac1c-499b-8bf1-31c65eaa47f7&quot;</span></span>
<span class="t" id="c15" style='left:58.7px;top:868.90px;font:400 12.36px "Liberation Mono","Loma","Noto Sans Thai","DejaVu Sans Mono",monospace;color:#e4e4e4;z-index:1;'><span class="k">trouble_code_id</span><span class="w">: </span><span class="s">&quot;f7492f43-8503-4a61-ab2c-ef72dc07cae4&quot;</span></span>
<span class="t" id="c16" style='left:58.7px;top:886.90px;font:400 12.36px "Liberation Mono","Loma","Noto Sans Thai","DejaVu Sans Mono",monospace;color:#e4e4e4;z-index:1;'><span class="k">type_of_function_id</span><span class="w">: </span><span class="n">null</span></span>
<span class="t" id="c17" style='left:58.7px;top:904.90px;font:400 12.36px "Liberation Mono","Loma","Noto Sans Thai","DejaVu Sans Mono",monospace;color:#e4e4e4;z-index:1;'><span class="k">updated_by</span><span class="w">: </span><span class="s">&quot;79765f02-b7ad-42bf-9ed6-7d5870880740&quot;</span></span>
<span class="t" id="c18" style='left:58.7px;top:922.90px;font:400 12.36px "Liberation Mono","Loma","Noto Sans Thai","DejaVu Sans Mono",monospace;color:#e4e4e4;z-index:1;'><span class="k">updated_date</span><span class="w">: </span><span class="s">&quot;2026-04-02T06:36:17.000Z&quot;</span></span>
<span class="t" id="c19" style='left:58.7px;top:940.90px;font:400 12.36px "Liberation Mono","Loma","Noto Sans Thai","DejaVu Sans Mono",monospace;color:#e4e4e4;z-index:1;'><span class="k">updated_pgm</span><span class="w">: </span><span class="n">null</span></span>
<span class="t" id="c20" style='left:58.7px;top:958.90px;font:400 12.36px "Liberation Mono","Loma","Noto Sans Thai","DejaVu Sans Mono",monospace;color:#e4e4e4;z-index:1;'><span class="n">[[Prototype]]</span><span class="w">: </span><span class="w">Object</span></span>
</body>
</html>
